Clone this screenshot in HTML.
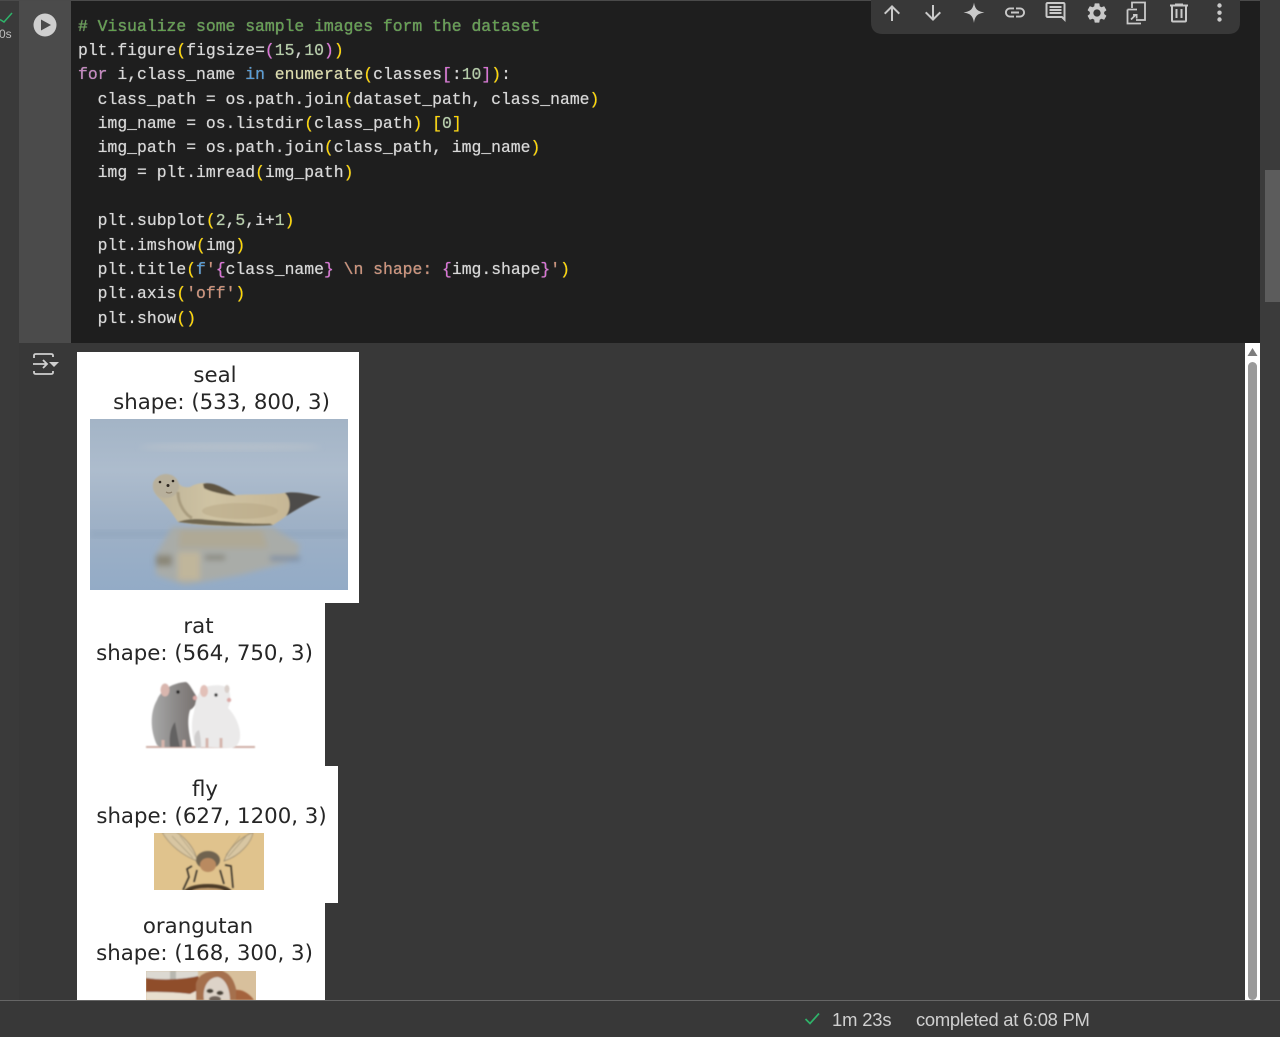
<!DOCTYPE html>
<html><head><meta charset="utf-8"><title>Notebook</title>
<style>
html,body{margin:0;padding:0;width:1280px;height:1037px;overflow:hidden;background:#383838}
.a{position:absolute}
#code{position:absolute;left:78px;top:14.500px;font:16.400px/24.350px "Liberation Mono",monospace;color:#d8d8d8;white-space:pre;margin:0;text-shadow:0 0 .6px #d4d4d4}
.c{color:#62a04e}.k{color:#c586c0}.b{color:#569cd6}.f{color:#dcdcaa}.y{color:#ffd700}.p{color:#da70d6}.n{color:#b5cea8}.s{color:#ce9178}
.t{position:absolute;font:21.300px/26px "DejaVu Sans",sans-serif;color:#262626;white-space:pre;transform:translateX(-50%)}
.st{position:absolute;font:18.400px/24px "Liberation Sans",sans-serif;color:#d0d0d0;white-space:pre}
</style></head><body>
<div class="a" style="left:0;top:0;width:19px;height:1000px;background:#3a3a3a"></div>
<div class="a" style="left:19px;top:0;width:52px;height:343px;background:#4b4b4b"></div>
<div class="a" style="left:71px;top:0;width:1189px;height:343px;background:#1e1e1e"></div>
<div class="a" style="left:0;top:0;width:1280px;height:1px;background:#4a4a4a"></div>
<div class="a" style="left:1260px;top:0;width:20px;height:1000px;background:#3b3b3b"></div>
<div class="a" style="left:1265px;top:170px;width:15px;height:132px;background:#5c5c5c"></div>
<pre id="code"><span class="c"># Visualize some sample images form the dataset</span>
plt.figure<span class="y">(</span>figsize=<span class="p">(</span><span class="n">15</span>,<span class="n">10</span><span class="p">)</span><span class="y">)</span>
<span class="k">for</span> i,class_name <span class="b">in</span> <span class="f">enumerate</span><span class="y">(</span>classes<span class="p">[</span>:<span class="n">10</span><span class="p">]</span><span class="y">)</span>:
  class_path = os.path.join<span class="y">(</span>dataset_path, class_name<span class="y">)</span>
  img_name = os.listdir<span class="y">(</span>class_path<span class="y">)</span> <span class="y">[</span><span class="n">0</span><span class="y">]</span>
  img_path = os.path.join<span class="y">(</span>class_path, img_name<span class="y">)</span>
  img = plt.imread<span class="y">(</span>img_path<span class="y">)</span>

  plt.subplot<span class="y">(</span><span class="n">2</span>,<span class="n">5</span>,i+<span class="n">1</span><span class="y">)</span>
  plt.imshow<span class="y">(</span>img<span class="y">)</span>
  plt.title<span class="y">(</span><span class="b">f</span><span class="s">'</span><span class="p">{</span>class_name<span class="p">}</span> <span class="s">\n shape: </span><span class="p">{</span>img.shape<span class="p">}</span><span class="s">'</span><span class="y">)</span>
  plt.axis<span class="y">(</span><span class="s">'off'</span><span class="y">)</span>
  plt.show<span class="y">()</span></pre>

<div class="a" style="left:77px;top:352px;width:282px;height:251px;background:#fff"></div>
<div class="a" style="left:77px;top:603px;width:248px;height:163px;background:#fff"></div>
<div class="a" style="left:77px;top:766px;width:261px;height:137px;background:#fff"></div>
<div class="a" style="left:77px;top:903px;width:248px;height:97px;background:#fff"></div>

<div class="t" style="left:215px;top:363px">seal</div>
<div class="t" style="left:221.500px;top:390px">shape: (533, 800, 3)</div>
<div class="t" style="left:198.500px;top:614px">rat</div>
<div class="t" style="left:204.500px;top:641px">shape: (564, 750, 3)</div>
<div class="t" style="left:205px;top:777px">fly</div>
<div class="t" style="left:211.500px;top:804px">shape: (627, 1200, 3)</div>
<div class="t" style="left:198px;top:914px">orangutan</div>
<div class="t" style="left:204.500px;top:941px">shape: (168, 300, 3)</div>

<svg class="a" style="left:0;top:0" width="1280" height="1037" viewBox="0 0 1280 1037">
<defs>
<linearGradient id="sea" x1="0" y1="0" x2="0" y2="1"><stop offset="0" stop-color="#a3b4c6"/><stop offset=".3" stop-color="#adbccd"/><stop offset=".6" stop-color="#9fb1c6"/><stop offset="1" stop-color="#93abc6"/></linearGradient>
<linearGradient id="sb" x1="0" y1="0" x2="1" y2="0"><stop offset="0" stop-color="#bdb398"/><stop offset=".35" stop-color="#cfc3a3"/><stop offset="1" stop-color="#c2b18f"/></linearGradient>
<linearGradient id="gr" x1="0" y1="0" x2="1" y2="0"><stop offset="0" stop-color="#a9a9a9"/><stop offset=".5" stop-color="#8d8b8a"/><stop offset="1" stop-color="#77706e"/></linearGradient>
<filter id="b1"><feGaussianBlur stdDeviation=".7"/></filter>
<filter id="b3"><feGaussianBlur stdDeviation="3"/></filter>
<filter id="b2"><feGaussianBlur stdDeviation="1.600"/></filter>
<clipPath id="cs"><rect x="90" y="419" width="258" height="171"/></clipPath>
<clipPath id="cf"><rect x="154" y="833" width="110" height="57"/></clipPath>
<clipPath id="co"><rect x="146" y="971" width="110" height="29"/></clipPath>
</defs>

<!-- seal -->
<g clip-path="url(#cs)">
<rect x="90" y="419" width="258" height="171" fill="url(#sea)"/>
<ellipse cx="230" cy="447" rx="90" ry="4" fill="#b4bfcb" filter="url(#b3)"/>
<rect x="90" y="530" width="258" height="8" fill="#8ba0b8" opacity=".45" filter="url(#b3)"/>
<g filter="url(#b3)">
<path d="M172 527H272L300 545L296 560L240 575L185 585L156 575L156 555Z" fill="#a9aca8"/>
<path d="M180 530H262L268 548H178Z" fill="#afa996"/>
<path d="M178 552H200V580H178Z" fill="#c0b69b"/>
<path d="M156 555H172V566H156Z" fill="#8b8778"/>
<path d="M205 555H225V560H205Z" fill="#88877c"/>
<path d="M270 556H300V561H270Z" fill="#7f90a5"/>
</g>
<g filter="url(#b1)">
<path d="M153 484C154 474 172 472 177 480C179 485 182 488 190 487C200 481 212 482 224 490L236 495C252 494 270 495 284 493C295 491 308 494 321 497C308 502 296 510 286 516C281 520 276 523 273 525C245 527 205 527 178 522C172 513 167 506 160 499C155 494 152 490 153 484Z" fill="url(#sb)"/>
<ellipse cx="166" cy="486" rx="13" ry="12" fill="#b8b09c"/>
<path d="M178 522C205 526 245 527 273 525L270 523.500C245 524.500 215 520 198 519C189 519 183 520 178 522Z" fill="#6f6650"/>
<path d="M203 484C212 481 225 488 236 496C224 495 208 491 204 488Z" fill="#5f5443"/>
<path d="M285 493C295 491 308 494 321 497C308 502 298 509 286 516C291 509 291 499 285 493Z" fill="#4d4b48"/>
<ellipse cx="240" cy="511" rx="38" ry="8" fill="#b5a584" opacity=".5"/>
<path d="M178 492C178 505 186 515 192 518" stroke="#a99c7f" stroke-width="3" fill="none"/>
</g>
<circle cx="160" cy="482" r="1.300" fill="#2c2620"/><circle cx="173" cy="481" r="1.300" fill="#2c2620"/><circle cx="168" cy="485.500" r="1.500" fill="#2c2620"/>
<path d="M166 492Q169 494 172 492" stroke="#8c7f6a" stroke-width="1.200" fill="none"/>
</g>

<!-- rats -->
<g filter="url(#b1)">
<path d="M146 746H255V748H146Z" fill="#cfaea5"/>
<path d="M157 745C150 730 150 712 157 700C161 690 172 683 186 682C190 684 192 690 197 697C198 702 194 708 190 710C186 722 190 738 192 747H160Z" fill="url(#gr)"/>
<path d="M175 722C177 732 178 740 180 747H170C169 738 170 728 175 722Z" fill="#646262"/>
<path d="M196 747C191 735 191 722 194 712C196 700 197 692 205 687C212 685 222 684 228 688C231 694 231 702 228 708C236 716 241 728 240 738C239 744 236 747 232 748Z" fill="#ebeaea"/>
<path d="M199 730C201 738 201 744 201 748H196C193 740 194 732 199 730Z" fill="#cfcdcd"/>
<ellipse cx="165" cy="690" rx="4.500" ry="6.500" fill="#d9b6ae"/>
<ellipse cx="204" cy="691" rx="4" ry="6" fill="#e2c0b8"/>
<ellipse cx="227" cy="689" rx="2.500" ry="4" fill="#d9cfca"/>
<circle cx="178" cy="692" r="1.700" fill="#222"/><circle cx="216" cy="695" r="1.700" fill="#333"/>
<circle cx="195" cy="698" r="2.200" fill="#dba9a6"/><circle cx="229" cy="700" r="2.200" fill="#dba9a6"/>
<path d="M163 748V740M184 748V740M207 748V738M221 748V738" stroke="#d5b5ac" stroke-width="3"/>
</g>

<!-- fly -->
<g clip-path="url(#cf)">
<rect x="154" y="833" width="110" height="57" fill="#e0c38d"/>
<g filter="url(#b1)">
<path d="M197 861C184 856 170 846 162 832H176C186 838 196 850 197 861Z" fill="#d8c6a2" stroke="#8f8168" stroke-width=".7"/>
<path d="M224 861C228 849 240 838 253 832C252 842 240 856 224 861Z" fill="#d8c6a2" stroke="#8f8168" stroke-width=".7"/>
<path d="M172 836L193 858M180 836L196 857M247 835L228 857M240 836L226 855" stroke="#a49678" stroke-width=".6"/>
<path d="M192 866L187 869L189 877L183 890M225 865L231 866L233 888M197 870L194 882M220 870L224 884" stroke="#2e2a22" stroke-width="1.500" fill="none"/>
<ellipse cx="208" cy="860" rx="12" ry="9" fill="#6f6450"/>
<ellipse cx="208" cy="865" rx="8" ry="7" fill="#b98a60"/>
<ellipse cx="208" cy="892" rx="24" ry="8" fill="#4c3a28"/>
<ellipse cx="208" cy="892" rx="17" ry="4" fill="#c09c70"/>
</g>
</g>

<!-- orangutan -->
<g clip-path="url(#co)">
<rect x="146" y="971" width="110" height="29" fill="#d8c09c"/>
<g filter="url(#b1)">
<rect x="146" y="971" width="52" height="10" fill="#dcd9d2"/>
<rect x="170" y="971" width="6" height="9" fill="#b8b7b0"/>
<rect x="146" y="990" width="50" height="10" fill="#e8dfcf"/>
<path d="M146 978C160 980 180 980 198 976L202 988L190 994C175 992 160 992 146 992Z" fill="#8f4d2a"/>
<path d="M196 984C198 974 208 970 222 971C232 974 236 984 238 1000H196Z" fill="#a5704e"/>
<path d="M204 1000C202 988 208 977 218 977C226 979 230 990 230 1000Z" fill="#ddd3c8"/>
<ellipse cx="210" cy="991" rx="3.500" ry="2.200" fill="#4a4338"/>
<ellipse cx="220" cy="993" rx="3.500" ry="2.200" fill="#4a4338"/>
<ellipse cx="215" cy="999" rx="6" ry="3" fill="#6e6258"/>
<path d="M236 990C242 989 250 994 254 1000H236Z" fill="#a4633c"/>
</g>
</g>

<!-- gutter check -->
<path d="M0 19.500L4 22L12 13" fill="none" stroke="#2fb36a" stroke-width="1.500"/>
<text x="-1" y="38" font-family="Liberation Sans,sans-serif" font-size="12" fill="#bdbdbd">0s</text>
<!-- run -->
<circle cx="45" cy="25" r="11.500" fill="#cfcfcf"/>
<path d="M41 19.500L51 25L41 30.500Z" fill="#4b4b4b"/>
<!-- output icon -->
<g fill="none" stroke="#cfcfcf" stroke-width="1.800">
<path d="M34 358V355.500Q34 354 36 354H51Q53 354 53 355.500V357"/>
<path d="M34 371V372.500Q34 374 36 374H51Q53 374 53 372.500V371"/>
<path d="M33 364H47M43 360L47 364L43 368"/>
</g>
<path d="M49 362H59L54 367Z" fill="#cfcfcf"/>

<!-- toolbar -->
<path d="M871 0H1240V22Q1240 34 1228 34H883Q871 34 871 22Z" fill="#383838"/>
<g fill="#c9c9c9">
<g transform="translate(880,1)"><path d="M4 12l1.410 1.410L11 7.830V20h2V7.830l5.580 5.590L20 12l-8-8-8 8z"/></g>
<g transform="translate(921,1)"><path d="M20 12l-1.410-1.410L13 16.170V4h-2v12.170l-5.580-5.590L4 12l8 8 8-8z"/></g>
<path d="M974 2.500C975 9 977.500 11.500 984.500 12.500C977.500 13.500 975 16 974 23C973 16 970.500 13.500 963.500 12.500C970.500 11.500 973 9 974 2.500Z"/>
<g transform="translate(1003,0.500)"><path d="M3.900 12c0-1.710 1.390-3.100 3.100-3.100h4V7H7c-2.760 0-5 2.240-5 5s2.240 5 5 5h4v-1.900H7c-1.710 0-3.100-1.390-3.100-3.100zM8 13h8v-2H8v2zm9-6h-4v1.900h4c1.710 0 3.100 1.390 3.100 3.100s-1.390 3.100-3.100 3.100h-4V17h4c2.760 0 5-2.240 5-5s-2.240-5-5-5z"/></g>
<g transform="translate(1043.500,0)"><path d="M20 2H4c-1.100 0-2 .9-2 2v12c0 1.100.9 2 2 2h14l4 4V4c0-1.100-.9-2-2-2zm0 15.170L18.830 16H4V4h16v13.170zM6 12h12v2H6zm0-3h12v2H6zm0-3h12v2H6z"/></g>
<g transform="translate(1085,1)"><path d="M19.140 12.940c.04-.3.06-.61.06-.94 0-.32-.02-.64-.07-.94l2.030-1.580c.18-.14.23-.41.12-.61l-1.920-3.320c-.12-.22-.37-.29-.59-.22l-2.390.96c-.5-.38-1.030-.7-1.620-.94l-.36-2.540c-.04-.24-.24-.41-.48-.41h-3.840c-.24 0-.43.17-.47.41l-.36 2.540c-.59.24-1.130.57-1.620.94l-2.390-.96c-.22-.08-.47 0-.59.22L2.740 8.870c-.12.21-.08.47.12.61l2.030 1.580c-.05.3-.09.63-.09.94s.02.64.07.94l-2.030 1.580c-.18.14-.23.41-.12.61l1.920 3.320c.12.22.37.29.59.22l2.390-.96c.5.38 1.030.7 1.620.94l.36 2.540c.05.24.24.41.48.41h3.840c.24 0 .44-.17.47-.41l.36-2.540c.59-.24 1.130-.56 1.620-.94l2.390.96c.22.08.47 0 .59-.22l1.920-3.320c.12-.22.07-.47-.12-.61l-2.010-1.580zM12 15.600c-1.980 0-3.600-1.620-3.600-3.600s1.620-3.600 3.600-3.600 3.600 1.620 3.600 3.600-1.620 3.600-3.600 3.600z"/></g>
<g fill="none" stroke="#c9c9c9" stroke-width="1.800">
<path d="M1132 8V2.500H1145V20H1136"/>
<path d="M1127.500 9.500H1137M1127.500 9.500V23.500H1141"/>
<path d="M1131 19.500L1136 14.500"/>
</g>
<path d="M1133 14H1137.500V18.500H1135.800V15.700H1133Z"/>
<g fill="none" stroke="#c9c9c9" stroke-width="2">
<path d="M1172 6.500V20.500Q1172 21.500 1173 21.500H1185Q1186 21.500 1186 20.500V6.500"/>
<path d="M1170 5.500H1188M1175 4.500H1183"/>
<path d="M1176.500 9V18M1181.500 9V18"/>
</g>
<circle cx="1219.500" cy="5.500" r="2.200"/><circle cx="1219.500" cy="12.700" r="2.200"/><circle cx="1219.500" cy="19.500" r="2.200"/>
</g>

<!-- output scrollbar -->
<rect x="1245" y="343" width="15" height="657" fill="#fff"/>
<rect x="1248" y="362" width="9" height="638" rx="4.500" fill="#9a9a9a"/>
<path d="M1252.500 348L1257.500 356H1247.500Z" fill="#7d7d7d"/>
</svg>

<!-- status bar -->
<div class="a" style="left:0;top:1000px;width:1280px;height:37px;background:#383838;border-top:1px solid #666;box-sizing:border-box"></div>
<svg class="a" style="left:804px;top:1011px" width="18" height="16" viewBox="0 0 18 16"><path d="M1.500 8L6 12.500L15 2.500" fill="none" stroke="#2fb36a" stroke-width="1.700"/></svg>
<div class="st" style="left:832px;top:1008px;letter-spacing:-.15px">1m 23s</div>
<div class="st" style="left:916px;top:1008px;letter-spacing:-.27px">completed at 6:08 PM</div>
</body></html>
